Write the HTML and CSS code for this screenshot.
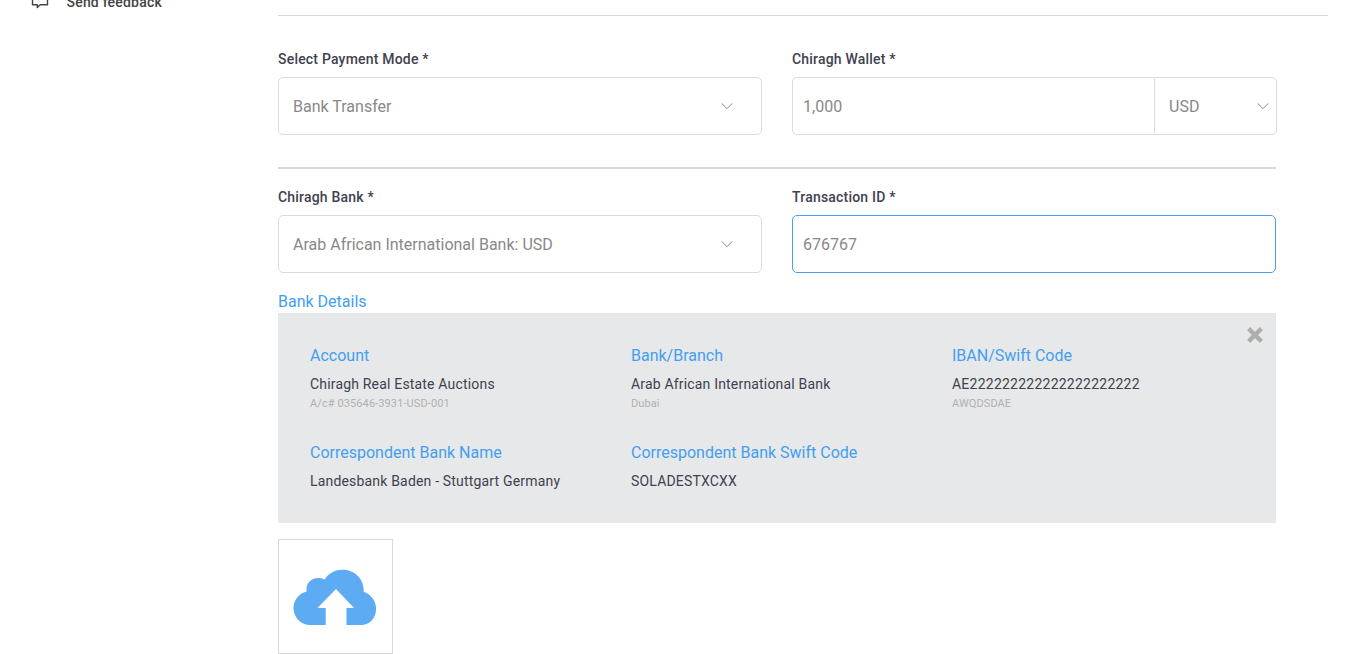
FILE: index.html
```html
<!DOCTYPE html>
<html lang="en">
<head>
<meta charset="utf-8">
<title>Payment</title>
<link rel="stylesheet" href="styles.css">
</head>
<body>
<div class="layout">
  <aside class="sidebar">
    <a class="nav-item">
      <svg class="nav-icon" width="18" height="18" viewBox="0 0 18 18"><path d="M1.5 1.5h15v12.2H9.2L6.3 16.600v-2.900H1.500z" fill="none" stroke="#444" stroke-width="1.400" stroke-linejoin="round"/></svg>
      <span>Send feedback</span>
    </a>
  </aside>
  <main class="main">
    <div class="rule"></div>
    <div class="content">
      <div class="row row-mode">
        <div class="field">
          <label class="label">Select Payment Mode *</label>
          <div class="control select"><span>Bank Transfer</span><svg class="chevron" width="12" height="8" viewBox="0 0 12 8"><path d="M.8 1.500l5.200 5.200L11.200 1.500"/></svg></div>
        </div>
        <div class="field">
          <label class="label">Chiragh Wallet *</label>
          <div class="group">
            <div class="control input amount">1,000</div>
            <div class="control select currency"><span>USD</span><svg class="chevron" width="12" height="8" viewBox="0 0 12 8"><path d="M.8 1.500l5.200 5.200L11.200 1.500"/></svg></div>
          </div>
        </div>
      </div>
      <div class="divider"></div>
      <div class="row">
        <div class="field">
          <label class="label">Chiragh Bank *</label>
          <div class="control select"><span>Arab African International Bank: USD</span><svg class="chevron" width="12" height="8" viewBox="0 0 12 8"><path d="M.8 1.500l5.200 5.200L11.200 1.500"/></svg></div>
        </div>
        <div class="field">
          <label class="label">Transaction ID *</label>
          <div class="control input focused">676767</div>
        </div>
      </div>
      <h2 class="heading">Bank Details</h2>
      <section class="details">
        <svg class="close" width="16" height="16" viewBox="0 0 16 16"><path d="M3.200 3.200l9.600 9.600M12.800 3.200L3.200 12.800"/></svg>
        <div class="item"><h3>Account</h3><p>Chiragh Real Estate Auctions</p><small>A/c# 035646-3931-USD-001</small></div>
        <div class="item"><h3>Bank/Branch</h3><p>Arab African International Bank</p><small>Dubai</small></div>
        <div class="item"><h3>IBAN/Swift Code</h3><p class="iban">AE222222222222222222222</p><small>AWQDSDAE</small></div>
        <div class="item"><h3>Correspondent Bank Name</h3><p>Landesbank Baden - Stuttgart Germany</p></div>
        <div class="item"><h3>Correspondent Bank Swift Code</h3><p>SOLADESTXCXX</p></div>
      </section>
      <div class="upload">
        <svg width="83" height="56" viewBox="0 0 83 56"><path fill="#5dabf3" d="M16 56A17 17 0 0 1 13.700 22.500C12 14 20.500 5.500 31.500 10.500C42-6.500 71.500-1 70.800 22.800C89 30 85.500 54 70 56H53.500V39H61L43 20 24.500 39H32.700V56z"/></svg>
      </div>
    </div>
  </main>
</div>
</body>
</html>
```
FILE: styles.css
```css
* { box-sizing: border-box; }
body { margin: 0; height: 654px; overflow: hidden; background: #fff; font-family: Roboto, sans-serif; color: #41414f; }
h2, h3, p { margin: 0; font-weight: 400; }
.layout { display: flex; }
.sidebar { width: 278px; flex: none; }
.nav-item { display: flex; align-items: center; gap: 17.500px; height: 18px; margin: -9px 0 0 31px; font-size: 14px; font-weight: 500; letter-spacing: .2px; color: #444; }
.nav-item span { padding-top: 4px; }
.main { width: 1050px; padding-top: 15px; }
.rule { height: 1px; background: #d9d9d9; }
.content { width: 998px; padding-top: 33px; }
.row { display: grid; grid-template-columns: 484px 484px; gap: 30px; }
.label { display: block; height: 28px; line-height: 20px; font-size: 14px; font-weight: 500; letter-spacing: .2px; }
.control { display: flex; align-items: center; height: 58px; border: 1px solid #dcdcdc; border-radius: 5px; font-size: 16px; color: #888; }
.select { justify-content: space-between; padding: 0 28px 0 14px; }
.input { padding-left: 10px; }
.group { display: flex; width: 485px; }
.amount { flex: 1; border-right: 0; border-radius: 5px 0 0 5px; }
.currency { width: 123px; padding-right: 7px; border-radius: 0 5px 5px 0; }
.focused { border-color: #4a9fee; }
.chevron path { fill: none; stroke: #888; stroke-width: 1; }
.divider { height: 2px; margin: 32px 0 18px; background: #d9d9d9; }
.heading { height: 23px; margin-top: 17px; line-height: 24px; font-size: 16px; color: #439fee; }
.details { position: relative; display: grid; grid-template-columns: repeat(3, 321px); grid-template-rows: 97px 79px; height: 210px; padding: 31px 0 0 32px; background: #e7e8ea; }
.item h3 { line-height: 24px; font-size: 16px; color: #439fee; }
.item p { margin-top: 6px; line-height: 20px; font-size: 14px; letter-spacing: .18px; }
.item .iban { letter-spacing: .24px; }
.item small { display: block; padding-top: 1px; line-height: 18px; font-size: 11px; letter-spacing: .1px; color: #b0b0b0; }
.close { position: absolute; top: 14px; right: 13px; }
.close path { stroke: #adadad; stroke-width: 4.4; stroke-linecap: square; stroke-linejoin: round; fill: none; }
.upload { display: flex; align-items: center; padding-left: 14px; width: 115px; height: 115px; margin-top: 16px; border: 1px solid #d9d9d9; }
```
